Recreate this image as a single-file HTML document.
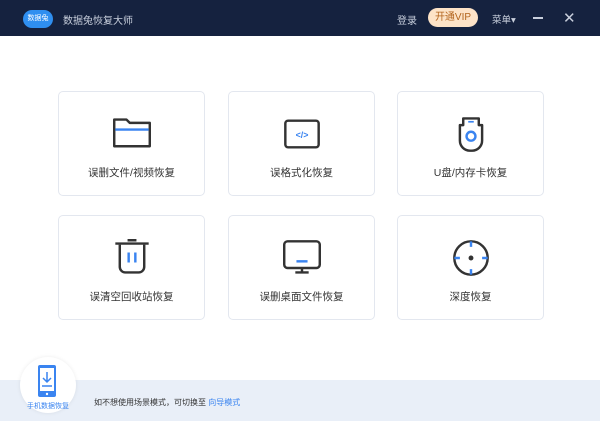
<!DOCTYPE html>
<html><head><meta charset="utf-8"><style>
*{margin:0;padding:0;box-sizing:border-box}
body{width:600px;height:421px;overflow:hidden;background:#fff;font-family:"Liberation Sans","Noto Sans CJK SC",sans-serif;position:relative}
.hd{position:absolute;left:0;top:0;width:600px;height:36px;background:#15223f;color:#c8cfdc;font-size:10px}
.hd span{position:absolute;top:12px}
.card{position:absolute;width:147px;height:105px;border:1px solid #e3e7ef;border-radius:5px;background:#fff}
.card svg{position:absolute;left:50%;top:22px;margin-left:-20px}
.card .t{position:absolute;left:0;right:0;top:73px;text-align:center;font-size:10.5px;color:#333}
.ft{position:absolute;left:0;top:380px;width:600px;height:41px;background:#e9eff8}
</style></head><body>
<div class="hd">
<div style="position:absolute;left:23px;top:10px;width:30px;height:18px;border-radius:9px;background:#2f8ff0;color:#fff;font-size:7px;line-height:18px;text-align:center">数据兔</div>
<span style="left:63px;top:12px">数据兔恢复大师</span>
<span style="left:397px">登录</span>
<div style="position:absolute;left:428px;top:8px;width:50px;height:19px;border-radius:10px;background:#fde3c7;color:#b3651e;font-size:10px;line-height:19px;text-align:center">开通VIP</div>
<span style="left:492px;font-size:9.5px">菜单▾</span>
<div style="position:absolute;left:533px;top:17px;width:10px;height:1.5px;background:#c8cfdc"></div>
<span style="left:563px;top:9px;font-size:15px">✕</span>
</div>
<div class="card" style="left:58px;top:91px"><svg width="40" height="40" viewBox="0 0 36 36"><path d="M2 5h11l3 3h18v21H2z" fill="none" stroke="#333" stroke-width="2.2" stroke-linejoin="round"/><path d="M3 14h30" stroke="#3a84f0" stroke-width="2.2"/></svg><div class="t">误删文件/视频恢复</div></div>
<div class="card" style="left:228px;top:91px"><svg width="40" height="40" viewBox="0 0 36 36"><rect x="3" y="6" width="30" height="24" rx="2.5" fill="none" stroke="#333" stroke-width="2.2"/><text x="18" y="21.5" text-anchor="middle" font-size="8" font-weight="bold" fill="#3a84f0" font-family="Liberation Sans">&lt;/&gt;</text></svg><div class="t">误格式化恢复</div></div>
<div class="card" style="left:397px;top:91px"><svg width="40" height="40" viewBox="0 0 36 36"><path d="M11 4h14v6h3v14a9 9 0 0 1-9 9h-2a9 9 0 0 1-9-9V10h3z" fill="none" stroke="#333" stroke-width="2.2" stroke-linejoin="round"/><path d="M15.5 7h5" stroke="#3a84f0" stroke-width="1.5"/><circle cx="18" cy="20" r="4" fill="none" stroke="#3a84f0" stroke-width="2.2"/></svg><div class="t">U盘/内存卡恢复</div></div>
<div class="card" style="left:58px;top:215px"><svg width="40" height="40" viewBox="0 0 36 36"><path d="M14 2h8M3 5h30" stroke="#333" stroke-width="2.2"/><path d="M7 6v20a5 5 0 0 0 5 5h12a5 5 0 0 0 5-5V6" fill="none" stroke="#333" stroke-width="2.2"/><path d="M15 13v9M21 13v9" stroke="#3a84f0" stroke-width="2.2"/></svg><div class="t">误清空回收站恢复</div></div>
<div class="card" style="left:228px;top:215px"><svg width="40" height="40" viewBox="0 0 36 36"><rect x="2" y="3" width="32" height="24" rx="3" fill="none" stroke="#333" stroke-width="2.2"/><path d="M13 21h10" stroke="#3a84f0" stroke-width="2.2"/><path d="M18 27v4M12 31h12" stroke="#333" stroke-width="2.2"/></svg><div class="t">误删桌面文件恢复</div></div>
<div class="card" style="left:397px;top:215px"><svg width="40" height="40" viewBox="0 0 36 36"><circle cx="18" cy="18" r="15" fill="none" stroke="#333" stroke-width="2.2"/><path d="M18 3v5M18 28v5M3 18h5M28 18h5" stroke="#3a84f0" stroke-width="2.2"/><circle cx="18" cy="18" r="2.2" fill="#333"/></svg><div class="t">深度恢复</div></div>
<div class="ft"></div>
<div style="position:absolute;left:20px;top:357px;width:56px;height:56px;border-radius:50%;background:#fff;box-shadow:0 0 4px rgba(0,0,0,.08)"></div>
<svg style="position:absolute;left:37px;top:364px" width="22" height="34" viewBox="0 0 22 34"><rect x="1" y="1" width="18" height="32" rx="2" fill="#3a84f0"/><rect x="3" y="4" width="14" height="23" fill="#fff"/><path d="M10 8v10M6 14l4 4 4-4M5 22h10" stroke="#3a84f0" stroke-width="1.5" fill="none"/><circle cx="10" cy="30" r="1.2" fill="#fff"/></svg>
<div style="position:absolute;left:26px;top:401px;font-size:7px;color:#3a84f0;width:44px;text-align:center">手机数据恢复</div>
<div style="position:absolute;left:94px;top:397px;font-size:8px;color:#333">如不想使用场景模式，可切换至 <span style="color:#3a84f0">向导模式</span></div>
</body></html>
